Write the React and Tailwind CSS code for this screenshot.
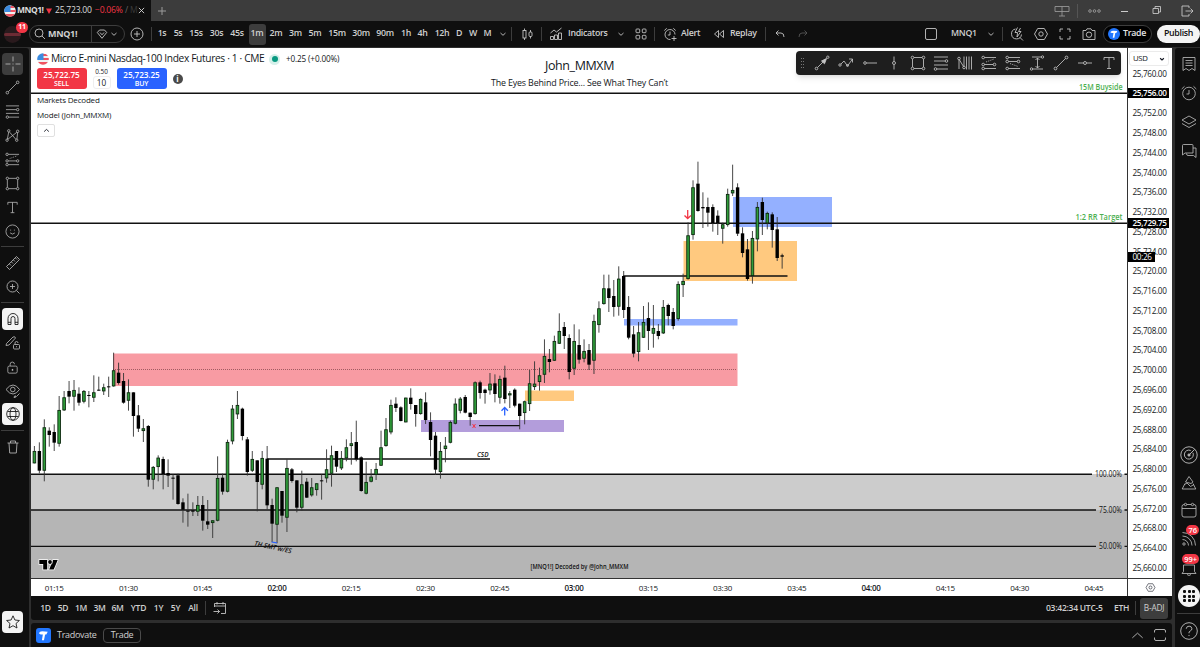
import clsx from 'clsx';

// Candles: [up, body top, body bottom, high, low], in thirds of a pixel from the top of the section
const SECTIONS = [
  {
    top: 340,
    bars: [
      [1, 333, 370, 318, 370], [0, 333, 392, 307, 400], [1, 262, 392, 238, 424], [0, 272, 285, 262, 320],
      [0, 276, 308, 253, 333], [1, 210, 311, 168, 320], [1, 172, 211, 153, 213], [0, 153, 170, 123, 190],
      [1, 150, 170, 120, 212], [0, 161, 188, 142, 197], [1, 153, 185, 150, 190], [0, 165, 168, 153, 202],
      [1, 157, 173, 106, 186], [0, 149, 151, 110, 152], [1, 142, 154, 131, 165], [0, 139, 142, 110, 171],
      [1, 91, 139, 38, 140], [0, 98, 129, 68, 134], [0, 123, 188, 99, 191], [1, 157, 182, 118, 212],
      [0, 157, 228, 157, 290], [0, 226, 266, 195, 276], [1, 265, 273, 237, 306], [0, 258, 419, 255, 440],
      [1, 381, 419, 378, 448], [1, 353, 381, 346, 424], [0, 357, 402, 350, 448], [0, 399, 407, 358, 441],
      [0, 413, 415, 403, 479], [0, 406, 492, 401, 494], [0, 487, 509, 475, 548], [0, 512, 514, 461, 560],
      [0, 511, 515, 487, 528], [1, 495, 515, 468, 528], [0, 495, 542, 468, 572], [0, 544, 554, 480, 567],
      [1, 541, 549, 541, 594], [1, 414, 542, 349, 544], [0, 413, 455, 401, 464], [1, 306, 455, 299, 457],
      [1, 206, 304, 195, 313], [1, 195, 223, 153, 237], [0, 206, 288, 203, 301], [0, 298, 396, 291, 407],
    ],
  },
  {
    top: 370,
    bars: [
      [1, 267, 302, 243, 306], [0, 271, 336, 271, 424], [1, 264, 344, 243, 358], [0, 266, 406, 228, 418],
      [0, 405, 461, 386, 516], [1, 352, 464, 352, 520], [0, 363, 437, 363, 458], [1, 294, 443, 268, 486],
      [0, 298, 333, 294, 338], [0, 331, 413, 331, 427], [1, 343, 413, 302, 423], [0, 335, 383, 324, 384],
      [1, 352, 376, 324, 380], [1, 340, 360, 340, 377], [0, 331, 334, 313, 389], [1, 298, 325, 238, 338],
      [1, 256, 311, 227, 350], [0, 243, 290, 243, 306], [1, 264, 295, 243, 300], [1, 232, 265, 208, 274],
      [1, 220, 228, 186, 284], [0, 216, 268, 152, 274], [0, 262, 363, 259, 365], [1, 336, 371, 275, 373],
      [1, 320, 335, 297, 337], [1, 297, 314, 279, 330], [1, 232, 287, 182, 288], [1, 178, 228, 144, 230],
      [1, 105, 187, 89, 193], [0, 101, 114, 82, 126], [0, 112, 153, 109, 154], [1, 83, 157, 83, 157],
      [0, 83, 102, 55, 119], [0, 105, 132, 105, 170], [1, 87, 132, 85, 134], [0, 97, 150, 67, 162],
    ],
  },
  {
    top: 300,
    bars: [
      [0, 366, 420, 337, 469], [0, 407, 509, 396, 525], [1, 453, 516, 426, 536], [1, 437, 447, 411, 487],
      [1, 366, 428, 362, 430], [1, 311, 371, 295, 373], [1, 296, 332, 291, 340], [0, 291, 338, 285, 340],
      [0, 338, 351, 338, 377], [1, 247, 342, 244, 344], [0, 247, 279, 242, 296], [0, 269, 279, 266, 311],
      [1, 251, 271, 219, 284], [0, 250, 282, 223, 307], [1, 237, 293, 227, 311], [0, 233, 297, 197, 310],
      [1, 280, 286, 273, 324], [0, 269, 317, 265, 322], [0, 311, 348, 311, 388], [1, 304, 339, 302, 373],
      [1, 250, 312, 210, 333], [1, 251, 261, 184, 270], [1, 226, 246, 203, 272], [1, 168, 224, 118, 249],
      [0, 177, 186, 147, 217], [1, 123, 182, 107, 183], [1, 93, 131, 40, 132], [0, 81, 108, 66, 147],
      [0, 114, 216, 103, 238], [1, 123, 206, 73, 225], [0, 135, 179, 88, 191], [1, 153, 176, 118, 187],
      [0, 150, 194, 132, 210], [1, 63, 182, 44, 222], [1, 25, 75, 4, 98],
    ],
  },
  {
    top: 150,
    bars: [
      [1, 415, 462, 374, 464], [0, 415, 444, 374, 486], [0, 438, 471, 390, 500], [1, 386, 470, 349, 497],
      [0, 378, 480, 363, 504], [0, 471, 563, 438, 568], [0, 553, 611, 528, 622], [1, 547, 606, 516, 634],
      [1, 516, 563, 468, 564], [0, 504, 543, 457, 600], [1, 534, 551, 465, 593], [0, 543, 558, 522, 568],
      [1, 471, 550, 450, 552], [0, 465, 498, 461, 526], [0, 486, 528, 474, 538], [1, 402, 507, 394, 512],
      [1, 393, 405, 371, 441], [1, 256, 387, 217, 389], [1, 112, 255, 91, 269], [0, 101, 183, 35, 185],
      [0, 171, 175, 127, 234], [0, 171, 188, 143, 230], [0, 171, 219, 163, 245], [0, 197, 219, 181, 255],
      [1, 223, 236, 218, 281], [1, 132, 225, 116, 230], [1, 120, 130, 44, 138], [0, 112, 251, 100, 258],
      [0, 250, 309, 232, 322], [0, 298, 387, 267, 392], [1, 264, 378, 243, 401], [1, 171, 268, 156, 304],
      [0, 156, 210, 143, 255], [1, 189, 220, 185, 238], [0, 193, 240, 187, 293], [0, 238, 324, 201, 333],
      [0, 316, 320, 311, 356],
    ],
  },
];

const CANDLES = SECTIONS.flatMap(({ top, bars }) =>
  bars.map(([up, ...ys]) => [up, ...ys.map((y) => top + y / 3)])
);

const PRICES = Array.from({ length: 26 }, (_, i) => 25760 - i * 4);

const TIMES = ['01:15', '01:30', '01:45', '02:00', '02:15', '02:30', '02:45', '03:00', '03:15', '03:30', '03:45', '04:00', '04:15', '04:30', '04:45'];

const INTERVALS = [
  ['1s', 'w-[16px]'], ['5s', 'w-[16px]'], ['15s', 'w-[20px]'], ['30s', 'w-[21px]'], ['45s', 'w-[20px]'],
  ['1m', 'w-[20px]'], ['2m', 'w-[18px]'], ['3m', 'w-[21px]'], ['5m', 'w-[18px]'], ['15m', 'w-[26px]'],
  ['30m', 'w-[22px]'], ['90m', 'w-[26px]'], ['1h', 'w-[16px]'], ['4h', 'w-[17px]'], ['12h', 'w-[22px]'],
  ['D', 'w-[12px]'], ['W', 'w-[16px]'], ['M', 'w-[13px]'],
];

const ICONS = {
  cross: <path d="M8 .5v5M8 10.500v5M.5 8h5M10.500 8h5M8 7.500v1" />,
  trend: <><circle cx="2.500" cy="13.500" r="1.400" /><circle cx="13.500" cy="2.500" r="1.400" /><path d="M3.500 12.500l9-9" /></>,
  fib: <><path d="M1 2h14M1 6h11M1 10h14M4 14h11" /><circle cx="13.500" cy="6" r="1.300" /><circle cx="2.500" cy="14" r="1.300" /></>,
  pattern: <><path d="M2.500 12L4 4M5 4.500l6.500 7.500M12.700 12l.8-7.500M3 12L12.700 4.500" /><circle cx="2.200" cy="13" r="1.300" /><circle cx="4" cy="3" r="1.300" /><circle cx="12.500" cy="13" r="1.300" /><circle cx="13.500" cy="3.500" r="1.300" /></>,
  position: <><circle cx="2.200" cy="2.500" r="1.300" /><circle cx="2.200" cy="9.500" r="1.300" /><circle cx="13.500" cy="9.500" r="1.300" /><circle cx="2.200" cy="13.500" r="1.300" /><path d="M3.500 2.500H15M3.500 9.500h8.700M3.500 13.500H15" /><path d="M5 7l8-3" strokeDasharray="1 1" /></>,
  positionShort: <><circle cx="2.200" cy="2.500" r="1.300" /><circle cx="2.200" cy="6.500" r="1.300" /><circle cx="13.500" cy="6.500" r="1.300" /><circle cx="2.200" cy="13.500" r="1.300" /><path d="M3.500 2.500H15M3.500 6.500h8.700M3.500 13.500H15" /><path d="M5 8.500l8 3" strokeDasharray="1 1" /></>,
  rect: <><path d="M4 2.500h8M4 13.500h8M2.500 4v8M13.500 4v8" /><circle cx="2.500" cy="2.500" r="1.300" /><circle cx="13.500" cy="2.500" r="1.300" /><circle cx="2.500" cy="13.500" r="1.300" /><circle cx="13.500" cy="13.500" r="1.300" /></>,
  text: <path d="M3 5V2.500h10V5M8 2.500v11M6 13.500h4" />,
  smile: <><circle cx="8" cy="8" r="7" /><path d="M6 6v1M10 6v1M5.500 9.500q2.500 2.500 5 0" /></>,
  ruler: <path d="M1.500 11.500l10-10 3 3-10 10zM4.500 9l1.500 1.500M6.500 7L8 8.500M8.500 5L10 6.500M10.500 3L12 4.500" />,
  zoomIn: <><circle cx="7.500" cy="7.500" r="5.500" /><path d="M11.500 11.500l3 3M7.500 5v5M5 7.500h5" /></>,
  magnet: <path d="M3 13.500V7.500a5 5 0 0 1 10 0v6h-3V7.500a2 2 0 0 0-4 0v6zM3 11.300h3M10 11.300h3" />,
  pencilLock: <><path d="M1.500 8.500l6.500-6.500q2-1 2.500 1l-6.500 7-3 .5zM10 9.500V8a1.500 1.500 0 0 1 3 0" /><rect x="8.500" y="9.500" width="6" height="4.500" rx="1" /><path d="M11.500 11.200v1" /></>,
  lock: <><rect x="3" y="6.500" width="10" height="7.500" rx="1.500" /><path d="M5.500 6.500V4.500a2.300 2.300 0 0 1 4.600 0" /><path d="M8 9.500v2" strokeWidth="1.500" /></>,
  eye: <><path d="M1 6.500q3.500-4.500 7-4.500t6.500 4.500Q11.500 11 8 11T1 6.500z" /><circle cx="7.800" cy="6.500" r="2.300" /><path d="M14.500 10.500l-3 3M9 14.500q0-2 2-1.500.5 1.500-2 1.500z" /></>,
  globe: <><circle cx="8" cy="8" r="6.300" /><ellipse cx="8" cy="8" rx="3" ry="6.300" /><path d="M2.500 5.500h11M2.500 10.500h11" /></>,
  trash: <path d="M2.500 4h11M5.500 4V2h5v2M4 4l.7 10h6.600L12 4" />,
  star: <path d="M8 1.800l1.900 4.200 4.500.5-3.400 3 1 4.500L8 11.700 4 14l1-4.500-3.400-3 4.500-.5z" />,
  search: <><circle cx="7" cy="7" r="4" /><path d="M10 10l3 3" /></>,
  gem: <><path d="M3.300 6.500L5.500 4h5l2.200 2.500L8 12.300z" /><path d="M6 6.500l2 2.300 2-2.300" /></>,
  chev: <path d="M5.500 7L8 9.300 10.500 7" />,
  chevUp: <path d="M2.500 10.500L8 5.500l5.500 5" />,
  plus: <><circle cx="8" cy="8" r="6" /><path d="M8 5v6M5 8h6" /></>,
  candles: <><rect x="4" y="4.500" width="3" height="7.500" /><rect x="10" y="6" width="3" height="4.500" rx="1" /><path d="M5.500 2.500v2M5.500 12v2M11.500 4v2M11.500 10.500v2" /></>,
  indicators: <><path d="M2.500 13.500v-3h3v3zM6.500 13.500V9h3v4.500zM10.500 13.500V7h3v6.500zM2.500 7l3.500-3 2.500 2 5-4" /></>,
  grid: <><rect x="3" y="3" width="3.700" height="3.700" rx=".8" /><rect x="9.300" y="3" width="3.700" height="3.700" rx=".8" /><rect x="3" y="9.300" width="3.700" height="3.700" rx=".8" /><rect x="9.300" y="9.300" width="3.700" height="3.700" rx=".8" /></>,
  alert: <><path d="M13 8.500a5 5 0 1 0-4.500 5M8 5.500V9H5.800M2.300 4.500L4.700 2.300M11.300 2.300l2.400 2.200M9.500 12.500h5M12 10v5" /></>,
  replay: <path d="M7.500 4.500v7L3.500 8zM12.500 4.500v7L8.500 8z" />,
  undo: <path d="M6.500 4.500L4 7l2.500 2.500M4 7h5q3 0 3 4" />,
  redo: <path d="M9.500 4.500L12 7 9.500 9.500M12 7H7q-3 0-3 4" />,
  square: <rect x="2.500" y="2.500" width="11" height="11" rx="1.500" />,
  flash: <><path d="M6.500 3a5 5 0 1 0 6 5.500M11 11.500l3 3" /><path d="M8.500 1.500L6 6.500h2.500L8 11l4-5.500H9.500L11.500 2" /></>,
  hex: <><path d="M4.700 2.500h6.600L14.500 8l-3.200 5.500H4.700L1.500 8z" /><circle cx="8" cy="8" r="2.200" /></>,
  full: <path d="M3 6V3h3M10 3h3v3M13 10v3h-3M6 13H3v-3" />,
  camera: <><path d="M2 4.500h3l1-1.700h4l1 1.700h3v9H2z" /><circle cx="8" cy="8.700" r="2.700" /></>,
  arrowLine: <><circle cx="2.500" cy="13.500" r="1.300" /><path d="M3.500 12.500l8-8" /><circle cx="13.800" cy="2.200" r="1.200" /><path d="M12.500 3.500L7.500 6l3 2.800z" fill="currentColor" /></>,
  zigzag: <><circle cx="2" cy="10" r="1.200" /><path d="M2.800 9.200L6 6l3.500 5L14.500 4M11 4h3.500v3.500" /><circle cx="9.500" cy="10.500" r="1" /></>,
  ray: <><circle cx="3" cy="8" r="1.300" /><path d="M4.300 8H15" /></>,
  vline: <><circle cx="8" cy="8" r="1.500" /><path d="M8 1.500v5M8 9.500v5" /></>,
  hline: <><circle cx="8" cy="8" r="1.500" /><path d="M1 8h5.500M9.500 8H15" /></>,
  channel: <><path d="M2 5v9M2.500 5l4 6.500M7 1.500V11M9.500 1.500v13M12 1.500v13M14.500 1.500v13" /><circle cx="2" cy="3.500" r="1.300" /><circle cx="7" cy="12.500" r="1.300" /></>,
  range: <><path d="M3 2h11M3 14h11M8.500 3v10M6.500 5l2-2 2 2M6.500 11l2 2 2-2" /><circle cx="13.500" cy="2" r="1.200" fill="#1e1e1e" /><circle cx="2.500" cy="14" r="1.200" fill="#1e1e1e" /></>,
  note: <path d="M2 1.500h12v13l-3-2-3 2-3-2-3 2zM4.500 4.500h7M4.500 7h7M4.500 9.500h7" />,
  alarm: <><circle cx="8" cy="8.500" r="6.300" /><path d="M8 5v4H5.500M.7 4L3.500 1.300M15.300 4l-2.800-2.700" /></>,
  layers: <path d="M8 2l7 4-7 4-7-4zM1 9.500l7 4 7-4" />,
  chat: <path d="M12 10V2.500q0-1-1-1H2.500q-1 0-1 1V12L4 10zM12 5h3v9.500L12.500 12.500H7q-1.500 0-1.500-2" />,
  radar: <><circle cx="8" cy="8" r="7.300" /><path d="M11.500 6a4 4 0 1 1-2-2M8 8l5-5" /><circle cx="8" cy="8" r="1" fill="currentColor" /></>,
  ideas: <path d="M8 1.500l4 5.500-2 1.500-3.500-1-2-.5zM4 8.500L1.200 14h13.600L12 8.500M3.500 9.500L6 8l3.500 3.500 3.500-2" />,
  calendar: <><rect x="1" y="2.500" width="14" height="12.500" rx="2" /><path d="M1 6.500h14" /><circle cx="4.500" cy="2.500" r="1.200" fill="#0f0f0f" /><circle cx="11.500" cy="2.500" r="1.200" fill="#0f0f0f" /></>,
  feed: <><circle cx="3" cy="13" r="1.200" /><path d="M1.500 8.500a6 6 0 0 1 6 6M1.500 5a9.500 9.500 0 0 1 9.500 9.500M1.500 1.500a13 13 0 0 1 13 13" /></>,
  bell: <path d="M1 12.500h14l-1.500-2V4h-11v6.500zM6 13.500q2 2 4 0" />,
  help: <><circle cx="8" cy="8" r="7.400" /><path d="M5.500 6q.3-2.300 2.600-2.300T10.600 6q0 1.300-1.500 2T8 10M8 11.500v1" /></>,
  goto: <path d="M2.500 7V3.500h11v10H9M2.500 6h11M5 2v2.500M11 2v2.500M1.500 11.500h6M5.500 9.500l2 2-2 2" />,
  frame: <path d="M2.500 5.500V4q0-1.500 1.500-1.500h8q1.500 0 1.500 1.500v1.500M2.500 10.500V12q0 1.500 1.500 1.500h8q1.500 0 1.500-1.500v-1.500" />,
  restore: <path d="M5 10.500v-5h5.500v5zM7 5.500v-2h5.500V9h-2" />,
  exit: <path d="M10 5V3H3v10h7v-2M6.500 8H14M11.500 5.500L14 8l-2.500 2.500" />,
  panels: <path d="M1 3.500h14v5H1zM8 3.500v9.500M5 13h6" />,
};

function Icon({ name, className }) {
  return (
    <svg viewBox="0 0 16 16" fill="none" stroke="currentColor" strokeWidth=".85" className={clsx('shrink-0', className || 'h-4 w-4')}>
      {ICONS[name]}
    </svg>
  );
}

function Cell({ name, className, size }) {
  return (
    <div className={clsx('flex shrink-0 items-center justify-center', className)}>
      <Icon name={name} className={size} />
    </div>
  );
}

function Flag() {
  return (
    <svg viewBox="0 0 12 12" className="h-3 w-3 shrink-0">
      <clipPath id="flag"><circle cx="6" cy="6" r="5.800" /></clipPath>
      <g clipPath="url(#flag)">
        <path d="M0 0h12v12H0z" fill="#f0f0f0" />
        <path d="M6 1h6v2H6zM6 5h6v2H6zM0 9h12v3H0z" fill="#ef5361" />
        <path d="M0 0h6.500v7H0z" fill="#3b8be0" />
      </g>
    </svg>
  );
}

function Tradovate({ className }) {
  return (
    <svg viewBox="0 0 16 16" className={className}>
      <path d="M3 5.500q1-2 3.500-2L12.500 4 11 6.800H9.700L8.500 13H6.300l1-6.200H5z" fill="#fff" />
    </svg>
  );
}

function Divider() {
  return <div className="h-3.5 w-px shrink-0 bg-[#3d3d3d]" />;
}

function TabStrip() {
  return (
    <div className="flex h-[21px] shrink-0 bg-[#3c3c3c] text-[#9b9b9b]">
      <div className="flex w-[151px] items-center bg-[#0f0f0f] pl-[4px] text-[8.600px] tracking-[-0.25px] text-[#dbdbdb]">
        <Flag />
        <span className="ml-[1px] w-[29px] text-[8.500px] font-bold tracking-[-0.5px] whitespace-nowrap">MNQ1!</span>
        <svg viewBox="0 0 6 6" className="mr-[3px] h-1.5 w-1.5"><path d="M0 .5h6L3 6z" fill="#f23645" /></svg>
        <span className="w-[40px] whitespace-nowrap">25,723.00</span>
        <span className="w-[30px] whitespace-nowrap text-[#f23645]">−0.06%</span>
        <span className="w-[13px] whitespace-nowrap text-[#666]">/ <span className="text-[#3a3a3a]">M</span></span>
        <svg viewBox="0 0 8 8" className="h-[7px] w-[7px]" stroke="currentColor"><path d="M1 1l6 6M7 1L1 7" /></svg>
      </div>
      <div className="flex w-[22px] items-center justify-center">
        <svg viewBox="0 0 8 8" className="h-2 w-2" stroke="currentColor"><path d="M4 0v8M0 4h8" /></svg>
      </div>
      <div className="flex flex-1 items-center justify-end">
        <Cell name="panels" className="w-[31px]" />
        <div className="h-3.5 w-px bg-[#555]" />
        <svg viewBox="0 0 16 6" className="mr-[9px] ml-[9px] h-1.5 w-4" fill="none" stroke="currentColor" strokeWidth=".9">
          <circle cx="3" cy="3" r="1.300" /><circle cx="7.500" cy="3" r="1.300" /><circle cx="12" cy="3" r="1.300" />
        </svg>
        <svg viewBox="0 0 8 8" className="mr-[19px] ml-[9px] h-2 w-2" stroke="#ccc"><path d="M0 4.500h7" /></svg>
        <Cell name="restore" size="h-4 w-4" className="mr-[15px] text-[#ccc]" />
        <Cell name="exit" className="mr-[5px] text-[#ccc]" />
      </div>
    </div>
  );
}

function TopBar() {
  return (
    <div className="flex h-[26px] shrink-0 items-center bg-[#0f0f0f] text-[8.800px] font-semibold tracking-[-0.3px] text-[#cfcfcf]">
      <div className="relative ml-[4px] h-[17px] w-[17px] rounded-full bg-[#2a1a1d]">
        <div className="mt-[7px] h-[3px] rounded-full bg-[#6d2b34]" />
        <span className="absolute -top-[4px] left-[12px] flex h-[11px] w-[12px] items-center justify-center rounded-full bg-[#f23645] text-[7px] font-bold text-white">11</span>
      </div>
      <div className="ml-[8px] flex h-[18px] w-[96px] shrink-0 items-center rounded-full border border-[#3d3d3d]">
        <Icon name="search" className="ml-[2px] h-4 w-4" />
        <span className="w-[43px] text-[9px] font-bold whitespace-nowrap">MNQ1!</span>
        <div className="h-full w-px bg-[#3d3d3d]" />
        <Icon name="gem" className="ml-[2px] h-4 w-4" />
        <Icon name="chev" className="-ml-[4px] h-4 w-4" />
      </div>
      <Cell name="plus" className="w-[23px]" />
      <div className="ml-[3px]"><Divider /></div>
      <div className="ml-[2px] flex h-full items-center">
        {INTERVALS.map(([label, w]) => (
          <div key={label} className={clsx('flex h-full shrink-0 items-center justify-center', w)}>
            <span className={clsx('flex h-[21px] items-center justify-center', label === '1m' && 'w-[17px] rounded-[3px] bg-[#3d3d3d]')}>{label}</span>
          </div>
        ))}
      </div>
      <Cell name="chev" className="w-[17px]" />
      <Divider />
      <Cell name="candles" className="w-[29px]" />
      <Divider />
      <Cell name="indicators" className="ml-[1px] w-[25px]" />
      <span className="w-[44px] whitespace-nowrap">Indicators</span>
      <Cell name="chev" className="w-[18px]" />
      <Cell name="grid" className="w-[21px]" />
      <div className="ml-[3px]"><Divider /></div>
      <Cell name="alert" className="ml-[3px] w-[23px]" />
      <span className="w-[28px] whitespace-nowrap">Alert</span>
      <Cell name="replay" className="mr-[2px] w-[19px]" />
      <span className="w-[35px] whitespace-nowrap">Replay</span>
      <Divider />
      <Cell name="undo" className="ml-[3px] w-[22px]" />
      <Cell name="redo" className="w-[24px] text-[#5a5a5a]" />
      <div className="flex flex-1 items-center justify-end">
        <Cell name="square" className="mr-[12px]" />
        <span className="w-[32px] whitespace-nowrap">MNQ1</span>
        <Cell name="chev" className="w-[16px]" />
        <div className="ml-[3px]"><Divider /></div>
        <Cell name="flash" className="ml-[2px] w-[24px]" />
        <Cell name="hex" className="w-[24px]" />
        <Cell name="full" className="w-[24px]" />
        <Cell name="camera" className="w-[23px]" />
        <div className="ml-[3px] flex h-[18px] w-[49px] items-center rounded-full border border-[#3d3d3d] bg-black pl-[4px] text-[#e5e5e5]">
          <span className="mr-[3px] h-[12px] w-[12px] rounded-full bg-[#2277ff]"><Tradovate className="h-3 w-3" /></span>
          Trade
        </div>
        <div className="ml-[5px] flex h-[18px] w-[43px] items-center justify-center rounded-full bg-[#f4f4f4] text-[#0f0f0f]">Publish</div>
      </div>
    </div>
  );
}

function LeftBar() {
  const box = 'mx-[2px] h-[22px] w-[21px] rounded-[4px]';
  const white = 'bg-[#f4f4f4] text-[#0f0f0f]';
  return (
    <div className="flex w-[29px] shrink-0 flex-col rounded-tr-[3px] bg-[#0f0f0f] pt-[5px] text-[#b8b8b8]">
      <Cell name="cross" className={clsx(box, 'mb-[1px] bg-[#3d3d3d]')} />
      {['trend', 'fib', 'pattern', 'position', 'rect', 'text', 'smile'].map((n) => (
        <Cell key={n} name={n} size="h-[15px] w-[15px]" className="h-[23.900px] w-[25px]" />
      ))}
      <div className="mt-[3px] ml-[1px] h-px w-[23px] bg-[#3d3d3d]" />
      <Cell name="ruler" className="mt-[4px] h-[24px] w-[25px]" />
      <Cell name="zoomIn" className="h-[24px] w-[25px]" />
      <div className="mt-[3px] ml-[1px] h-px w-[23px] bg-[#3d3d3d]" />
      <Cell name="magnet" className={clsx(box, white, 'mt-[5px]')} />
      <Cell name="pencilLock" className="mt-[1px] h-[24px] w-[25px]" />
      <Cell name="lock" size="h-[15px] w-[15px]" className="h-[24px] w-[25px]" />
      <Cell name="eye" className="h-[24px] w-[25px]" />
      <Cell name="globe" className={clsx(box, white)} />
      <div className="mt-[5px] ml-[1px] h-px w-[23px] bg-[#3d3d3d]" />
      <Cell name="trash" className="mt-[4px] h-[24px] w-[25px]" />
      <Cell name="star" className={clsx(box, white, 'mt-auto mb-[14px]')} />
    </div>
  );
}

function Badge({ children }) {
  return (
    <span className="absolute top-[1px] right-[1px] rounded-full bg-[#f23645] px-[2px] text-[7.500px] leading-[10px] font-semibold text-white">{children}</span>
  );
}

function RightBar() {
  return (
    <div className="flex w-[25px] shrink-0 flex-col rounded-tl-[3px] bg-[#0f0f0f] text-[#b8b8b8]">
      <div className="flex flex-col pt-[1px]">
        {['note', 'alarm', 'layers', 'chat'].map((n) => (
          <Cell key={n} name={n} className="h-[29px] w-[27px]" />
        ))}
      </div>
      <div className="mt-auto">
        <Cell name="radar" size="h-[18px] w-[18px]" className="h-[28px] w-[27px]" />
        <Cell name="ideas" className="h-[27px] w-[27px]" />
        <Cell name="calendar" className="h-[28px] w-[27px]" />
        <div className="relative"><Cell name="feed" className="h-[29px] w-[27px]" /><Badge>76</Badge></div>
        <div className="relative"><Cell name="bell" className="h-[32px] w-[27px]" /><Badge>99+</Badge></div>
        <div className="ml-[3px] flex h-[22px] w-[22px] items-center justify-center rounded-full bg-[#f4f4f4]">
          <div className="grid grid-cols-3 gap-[1.500px]">
            {Array.from({ length: 9 }, (_, i) => <i key={i} className="h-[3px] w-[3px] rounded-[1px] bg-[#0f0f0f]" />)}
          </div>
        </div>
        <div className="mt-[6px] ml-[2px] h-px bg-[#3d3d3d]" />
        <Cell name="help" size="h-[18px] w-[18px]" className="mt-[4px] mb-[3px] h-[26px] w-[27px]" />
      </div>
    </div>
  );
}

// SVG text squeezed or stretched to a given width
function Label({ w, ...props }) {
  return <text textLength={w} lengthAdjust="spacingAndGlyphs" {...props} />;
}

function Chart() {
  return (
    <svg viewBox="31 48 1096 530" className="block h-[530px] w-[1096px] bg-white">
      <g>
        <rect x="31" y="474" width="1096" height="36" fill="#ccc" />
        <rect x="31" y="510" width="1096" height="69" fill="#b5b5b5" />
        <rect x="113" y="353.500" width="624.500" height="32.500" fill="#f89ba3" />
        <rect x="525" y="390.500" width="49" height="10.500" fill="#ffc97f" />
        <rect x="421" y="420" width="143" height="12" fill="#b39ddb" />
        <rect x="624" y="319" width="113.500" height="6.500" fill="#94b0ff" />
        <rect x="733" y="197" width="99" height="30" fill="#94b0ff" />
        <rect x="683.500" y="241" width="113.500" height="40" fill="#ffc97f" />
      </g>
      <path d="M113 369.500h624" stroke="#8b4a52" strokeWidth=".8" strokeDasharray="1 1" />
      <g stroke="#111" strokeWidth="1.400">
        <path d="M31 93.300H1127M31 223.200H1127M623 276H787.500M267 459H490M479 425.600H520" />
        <path d="M31 474.200H1092M31 510H1096M31 546.400H1096M1124.500 474.200H1127M1124.500 510H1127M1124.500 546.400H1127" />
      </g>
      {CANDLES.map(([up, top, bottom, high, low], i) => {
        const x = 34.4 + i * 4.952;
        return (
          <g key={i}>
            <path d={`M${x} ${high}V${low}`} stroke="#333" strokeWidth=".9" />
            {up ? (
              <rect x={x - 1.3} y={top + 0.4} width="2.600" height={Math.max(bottom - top - 0.8, 1)} fill="#2f9e3a" stroke="#0d2a10" strokeWidth=".9" />
            ) : (
              <rect x={x - 1.7} y={top} width="3.400" height={Math.max(bottom - top, 1)} fill="#000" />
            )}
          </g>
        );
      })}
      <path d="M504.700 415.500V407.500M501.500 410.700l3.200-3.200 3.200 3.200" fill="none" stroke="#2962ff" strokeWidth="1.300" />
      <path d="M687.700 210v8.500M684.500 215.500l3.200 3 3.200-3" fill="none" stroke="#f23645" strokeWidth="1.300" />
      <path d="M472.500 424l3 4M475.500 424l-3 4" stroke="#f23645" strokeWidth="1" />
      <path d="M271.500 542l5.500.8" stroke="#2962ff" strokeWidth="1.200" />
      <g fontSize="8.300" fill="#111">
        <Label x="477" y="457" fontSize="7" fontWeight="600" fontStyle="italic" w="11.500">CSD</Label>
        <Label x="254" y="545.500" fontSize="6.800" fontWeight="600" fontStyle="italic" transform="rotate(12 254 545.500)" w="38">TH SMT w/ES</Label>
        <Label x="530.500" y="569.300" fontSize="7" fontWeight="600" w="98">[MNQ1!] Decoded by @John_MMXM</Label>
        <Label x="1095" y="477" w="27">100.00%</Label>
        <Label x="1099" y="512.800" w="23">75.00%</Label>
        <Label x="1099" y="549.200" w="23">50.00%</Label>
        <g fill="#4caf50" fontWeight="600">
          <Label x="1079" y="89.500" w="43.500">15M Buyside</Label>
          <Label x="1075.500" y="219.700" w="47">1:2 RR Target</Label>
        </g>
      </g>
      <g fill="#000" stroke="#fff" strokeWidth="1.400" paintOrder="stroke">
        <path d="M39.300 560h7.900v9.500h-4v-5.500h-3.900z" />
        <path d="M53 560h4.700l-4 9.500h-4.500z" />
        <circle cx="50" cy="562" r="1.900" />
      </g>
    </svg>
  );
}

function Legend() {
  const order = 'flex h-[21px] w-[50px] flex-col items-center justify-center rounded-[3px] text-[8.200px] leading-[9px] font-semibold tracking-[-0.1px] text-white';
  return (
    <div className="absolute top-[5px] left-[6px] text-[#131722]">
      <div className="flex h-[12px] items-center whitespace-nowrap">
        <Flag />
        <span className="ml-[2px] w-[215px] text-[10.200px] tracking-[-0.35px]">Micro E-mini Nasdaq-100 Index Futures · 1 · CME</span>
        <span className="mr-[6px] ml-[3px] flex h-[11px] w-[11px] items-center justify-center rounded-full bg-[#d5f0ea]">
          <i className="h-[6px] w-[6px] rounded-full bg-[#089981]" />
        </span>
        <span className="text-[8.200px] tracking-[-0.15px]">+0.25 (+0.00%)</span>
      </div>
      <div className="mt-[3px] -ml-[0.500px] flex">
        <div className={clsx(order, 'bg-[#f23645]')}><span>25,722.75</span><span className="text-[7px]">SELL</span></div>
        <div className="flex w-[30px] flex-col items-center leading-[7px]">
          <span className="text-[6.400px]">0.50</span>
          <span className="mt-[1px] flex h-[13px] w-[18px] items-center justify-center rounded-[3px] border border-[#eee] text-[8.200px]">10</span>
        </div>
        <div className={clsx(order, 'bg-[#2962ff]')}><span>25,723.25</span><span className="text-[7px]">BUY</span></div>
        <span className="mt-[6px] ml-[6px] flex h-[10px] w-[10px] items-center justify-center rounded-full bg-[#4a4a4a] text-[8px] font-bold text-white">i</span>
      </div>
      <div className="mt-[7px] h-[15px] text-[8px] leading-[8px] tracking-[-0.2px]">Markets Decoded</div>
      <div className="text-[8px] leading-[8px] tracking-[-0.15px]">Model (John_MMXM)</div>
      <div className="mt-[5px] flex h-[13px] w-[18px] items-center justify-center rounded-[2px] border border-[#e0e0e0]">
        <Icon name="chevUp" className="h-[7px] w-[7px] stroke-2" />
      </div>
    </div>
  );
}

function DrawingBar() {
  return (
    <div className="absolute top-[3px] left-[765px] flex h-[24px] w-[325px] items-center rounded-[4px] bg-[#1e1e1e] text-[#c4c4c4] shadow-md">
      <div className="ml-[5px] grid grid-cols-2 gap-[2px]">
        {Array.from({ length: 8 }, (_, i) => <i key={i} className="h-px w-px bg-[#777]" />)}
      </div>
      <div className="ml-[6.500px] flex">
        {['arrowLine', 'zigzag', 'ray', 'vline', 'rect', 'fib', 'channel', 'position', 'positionShort', 'range', 'trend', 'hline', 'text'].map((n) => (
          <Cell key={n} name={n} className="w-[23.950px]" />
        ))}
      </div>
    </div>
  );
}

function PriceTag({ className, children }) {
  return (
    <div className={clsx('absolute left-0 flex h-[10px] items-center bg-black pl-[4.500px] text-white', className)}>{children}</div>
  );
}

function PriceAxis() {
  return (
    <div className="relative h-[530px] w-[45px] overflow-hidden border-l border-[#333] bg-white text-[8.200px] tracking-[-0.34px] text-[#131722]">
      <div className="mt-[3px] ml-[1px] flex h-[15px] w-[40px] items-center justify-between rounded-[3px] border border-[#ebebeb] pl-[3px] text-[7.800px]">
        USD
        <Icon name="chev" className="h-3 w-3 stroke-[1.5]" />
      </div>
      <div className="-mt-[2px]">
        {PRICES.map((p) => (
          <div key={p} className="flex h-[19.770px] items-center pl-[4.500px]">
            {p !== 25756 && `${p.toLocaleString('en-US')}.00`}
          </div>
        ))}
      </div>
      <PriceTag className="top-[40px] w-[41px] font-semibold">25,756.00</PriceTag>
      <PriceTag className="top-[170px] w-[41px] font-semibold">25,729.75</PriceTag>
      <PriceTag className="top-[204px] w-[27px]">00:26</PriceTag>
    </div>
  );
}

export default function App() {
  return (
    <div className="flex h-[647px] w-[1200px] flex-col overflow-hidden bg-[#2e2e2e] font-['Open_Sans',sans-serif]">
      <TabStrip />
      <TopBar />
      <div className="mt-[1px] flex min-h-0 flex-1">
        <LeftBar />
        <div className="mr-[3px] ml-[2px] flex w-[1141px] flex-col">
          {/* Chart */}
          <div className="flex">
            <div className="relative w-[1096px]">
              <Chart />
              <Legend />
              <div className="absolute top-[10px] left-[400px] w-[297px] text-center text-[#131722]">
                <div className="text-[12.500px] leading-[16px] tracking-[-0.4px]">John_MMXM</div>
                <div className="mt-[3px] text-[8.900px] leading-[12px] tracking-[-0.15px]">The Eyes Behind Price... See What They Can’t</div>
              </div>
              <DrawingBar />
            </div>
            <PriceAxis />
          </div>
          {/* Time axis */}
          <div className="flex h-[18px] border-t border-[#333] bg-white text-[8px] tracking-[-0.3px] text-[#131722]">
            <div className="flex w-[1096px] items-center overflow-hidden">
              <div className="-ml-[14px] flex">
                {TIMES.map((t) => (
                  <div key={t} className={clsx('w-[74.280px] shrink-0 text-center', t.endsWith(':00') && 'font-semibold')}>{t}</div>
                ))}
              </div>
            </div>
            <div className="flex w-[45px] items-center justify-center border-l border-[#333]">
              <Icon name="hex" className="h-[11px] w-[11px]" />
            </div>
          </div>
          {/* Date ranges */}
          <div className="flex h-[24px] items-center rounded-b-[3px] bg-[#0f0f0f] text-[8.500px] font-semibold tracking-[-0.25px] text-[#cfcfcf]">
            <div className="ml-[5px] flex">
              <span className="w-[19px] text-center">1D</span>
              <span className="w-[16px] text-center">5D</span>
              <span className="w-[20px] text-center">1M</span>
              <span className="w-[17px] text-center">3M</span>
              <span className="w-[19px] text-center">6M</span>
              <span className="w-[23px] text-center">YTD</span>
              <span className="w-[17px] text-center">1Y</span>
              <span className="w-[17px] text-center">5Y</span>
              <span className="w-[18px] text-center">All</span>
            </div>
            <div className="ml-[3px]"><Divider /></div>
            <Cell name="goto" className="ml-[6px]" />
            <span className="ml-auto w-[68px] whitespace-nowrap">03:42:34 UTC-5</span>
            <span className="w-[21px]">ETH</span>
            <Divider />
            <span className="mr-[4px] ml-[4px] flex h-[21px] w-[28px] items-center justify-center rounded-[3px] bg-[#3d3d3d] text-[8.300px] font-normal whitespace-nowrap">B-ADJ</span>
          </div>
          {/* Broker */}
          <div className="mt-[3px] flex flex-1 items-center rounded-t-[3px] bg-[#0f0f0f] text-[9px] font-medium tracking-[-0.3px] text-[#cfcfcf]">
            <span className="ml-[5px] h-[15px] w-[15px] rounded-[3px] bg-[#2277ff]"><Tradovate className="h-[15px] w-[15px]" /></span>
            <span className="ml-[6px] w-[46px]">Tradovate</span>
            <span className="flex h-[15px] w-[38px] items-center justify-center rounded-[4px] border border-[#4a4a4a]">Trade</span>
            <Cell name="chevUp" size="h-[15px] w-[15px]" className="ml-auto" />
            <Cell name="frame" className="mr-[4px] ml-[7px]" />
          </div>
        </div>
        <RightBar />
      </div>
    </div>
  );
}
